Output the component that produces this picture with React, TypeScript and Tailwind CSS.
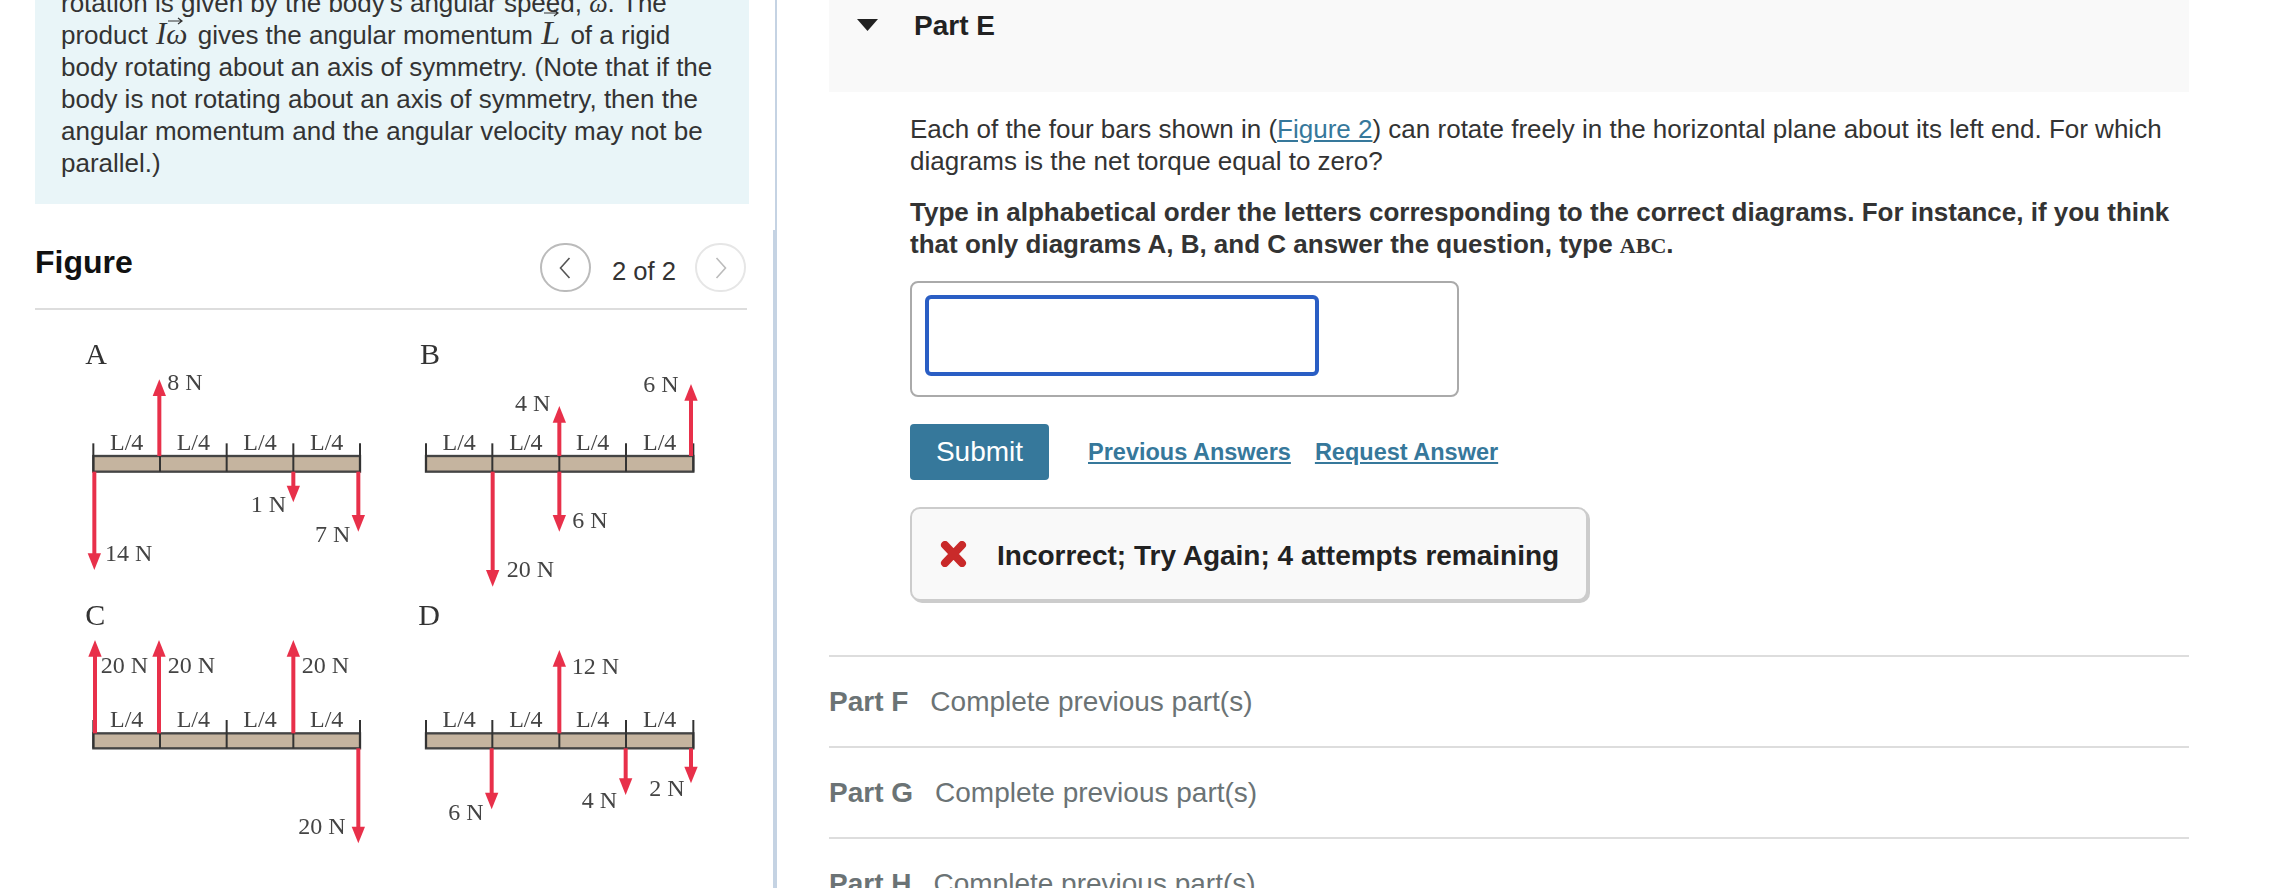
type Arrow = { x: number; tip: number; end: number; label: string; lx: number; ly: number }

type Diagram = {
  letter: string
  letterX: number
  letterY: number
  barTop: number
  barBottom: number
  tickTop: number
  ticks: number[]
  labelY: number
  arrows: Arrow[]
}

const diagrams: Diagram[] = [
  {
    letter: 'A',
    letterX: 76,
    letterY: 132,
    barTop: 408,
    barBottom: 455,
    tickTop: 370,
    ticks: [100, 300, 500, 700, 900],
    labelY: 390,
    arrows: [
      { x: 298, tip: 178, end: 408, label: '8 N', lx: 322, ly: 210 },
      { x: 103, tip: 750, end: 455, label: '14 N', lx: 135, ly: 722 },
      { x: 700, tip: 547, end: 455, label: '1 N', lx: 572, ly: 575 },
      { x: 895, tip: 635, end: 455, label: '7 N', lx: 765, ly: 665 },
    ],
  },
  {
    letter: 'B',
    letterX: 60,
    letterY: 132,
    barTop: 408,
    barBottom: 455,
    tickTop: 370,
    ticks: [78, 277, 478, 678, 880],
    labelY: 390,
    arrows: [
      { x: 478, tip: 258, end: 408, label: '4 N', lx: 345, ly: 272 },
      { x: 873, tip: 192, end: 408, label: '6 N', lx: 730, ly: 215 },
      { x: 478, tip: 635, end: 455, label: '6 N', lx: 517, ly: 625 },
      { x: 278, tip: 800, end: 455, label: '20 N', lx: 320, ly: 772 },
    ],
  },
  {
    letter: 'C',
    letterX: 76,
    letterY: 105,
    barTop: 430,
    barBottom: 475,
    tickTop: 390,
    ticks: [100, 300, 500, 700, 900],
    labelY: 410,
    arrows: [
      { x: 105, tip: 150, end: 430, label: '20 N', lx: 122, ly: 250 },
      { x: 297, tip: 150, end: 430, label: '20 N', lx: 323, ly: 250 },
      { x: 700, tip: 150, end: 430, label: '20 N', lx: 725, ly: 250 },
      { x: 895, tip: 760, end: 475, label: '20 N', lx: 715, ly: 733 },
    ],
  },
  {
    letter: 'D',
    letterX: 55,
    letterY: 105,
    barTop: 430,
    barBottom: 475,
    tickTop: 390,
    ticks: [78, 277, 478, 678, 880],
    labelY: 410,
    arrows: [
      { x: 478, tip: 180, end: 430, label: '12 N', lx: 515, ly: 252 },
      { x: 275, tip: 658, end: 475, label: '6 N', lx: 145, ly: 690 },
      { x: 677, tip: 615, end: 475, label: '4 N', lx: 545, ly: 655 },
      { x: 873, tip: 580, end: 475, label: '2 N', lx: 748, ly: 618 },
    ],
  },
]

const serif = '"Liberation Serif", serif'

function BarDiagram({ d }: { d: Diagram }) {
  const left = d.ticks[0]
  const right = d.ticks[4]
  return (
    <svg viewBox="0 0 1020 840" className="w-[340px] h-[280px] overflow-visible blur-[0.6px]">
      <text x={d.letterX} y={d.letterY} fontFamily={serif} fontSize={90} fill="#333">
        {d.letter}
      </text>
      <rect x={left} y={d.barTop} width={right - left} height={d.barBottom - d.barTop} fill="#c5b49f" stroke="#444" strokeWidth={7} />
      {d.ticks.map((t) => (
        <line key={t} x1={t} x2={t} y1={d.tickTop} y2={d.barBottom} stroke="#333" strokeWidth={6} />
      ))}
      {d.ticks.slice(0, 4).map((t, i) => (
        <text key={t} x={(t + d.ticks[i + 1]) / 2} y={d.labelY} textAnchor="middle" fontFamily={serif} fontSize={72} fill="#444">
          L/4
        </text>
      ))}
      {d.arrows.map((a) => {
        const dir = a.tip < a.end ? 1 : -1
        return (
          <g key={a.x + a.label + a.lx}>
            <line x1={a.x} x2={a.x} y1={a.end} y2={a.tip + dir * 40} stroke="#e8304a" strokeWidth={12} />
            <polygon points={`${a.x},${a.tip} ${a.x - 20},${a.tip + dir * 50} ${a.x + 20},${a.tip + dir * 50}`} fill="#e8304a" />
            <text x={a.lx} y={a.ly} fontFamily={serif} fontSize={72} fill="#444">
              {a.label}
            </text>
          </g>
        )
      })}
    </svg>
  )
}

function VectorSymbol({ base, className }: { base: string; className: string }) {
  return (
    <span className="relative inline-block leading-[20px] font-['Liberation_Serif',serif] italic">
      {base}
      <svg viewBox="0 0 16 8" className={`absolute w-[16px] h-[8px] ${className}`}>
        <path d="M0 4h14M10 1l4 3-4 3" fill="none" stroke="#333" strokeWidth="1.2" />
      </svg>
    </span>
  )
}

function LockedPart({ name }: { name: string }) {
  return (
    <div className="flex items-center gap-[22px] h-[91px] border-t-2 border-[#dddddd] text-[28px] text-[#6b7375]">
      <span className="font-bold">{name}</span>
      <span>Complete previous part(s)</span>
    </div>
  )
}

export default function App() {
  return (
    <div className="flex h-[888px] overflow-hidden bg-white font-['Liberation_Sans',sans-serif] text-[26px] leading-[32px] text-[#333333]">
      {/* Left Content */}
      <div className="w-[773px] shrink-0 pl-[35px] pr-[24px]">
        <div className="bg-[#e9f5f8] -mt-[40px] pt-[27px] pb-[25px] pl-[26px] pr-[29px]">
          <p>
            rotation is given by the body's angular speed, <span className="leading-[0] font-['Liberation_Serif',serif] italic">ω</span>. The
            product <span className="leading-[0] font-['Liberation_Serif',serif] italic text-[31px] ml-[1px]">I</span>
            <span className="text-[30px] leading-[0] mr-[3px]">
              <VectorSymbol base="ω" className="left-[2px] top-[-7px]" />
            </span>{' '}
            gives the angular momentum{' '}
            <span className="leading-[0] text-[34px] ml-[1px] mr-[3px]">
              <VectorSymbol base="L" className="left-[3px] top-[-14px]" />
            </span>{' '}
            of a rigid body rotating about an axis of symmetry. (Note that if the body is not rotating about an axis of symmetry, then
            the angular momentum and the angular velocity may not be parallel.)
          </p>
        </div>

        <div className="flex items-start justify-between mt-[39px] pb-[16px] border-b-2 border-[#dddddd] mr-[2px]">
          <h2 className="font-bold text-[32px] leading-[38px] text-[#111111]">Figure</h2>
          <div className="flex items-center h-[49px] mr-[1px]">
            <button className="w-[51px] h-[49px] rounded-full border-2 border-[#bbbbbb] flex items-center justify-center">
              <svg viewBox="0 0 12 22" className="w-[12px] h-[22px]">
                <path d="M10.500 1L1.500 11l9 10" fill="none" stroke="#555" strokeWidth="1.6" />
              </svg>
            </button>
            <span className="ml-[21px] mr-[19px] mt-[7px] text-[25.6px]">2 of 2</span>
            <button className="w-[51px] h-[49px] rounded-full border-2 border-[#e6e6e6] flex items-center justify-center">
              <svg viewBox="0 0 12 22" className="w-[12px] h-[22px]">
                <path d="M1.500 1l9 10-9 10" fill="none" stroke="#bbb" strokeWidth="1.6" />
              </svg>
            </button>
          </div>
        </div>

        <div className="grid grid-cols-[340px_340px] grid-rows-[270px_280px] mt-[10px] ml-[25px]">
          {diagrams.map((d) => (
            <BarDiagram key={d.letter} d={d} />
          ))}
        </div>
      </div>

      {/* Divider */}
      <div className="w-[4px] shrink-0 flex flex-col items-end">
        <div className="w-[2px] h-[230px] bg-[#c5d3e3]" />
        <div className="w-[4px] flex-1 bg-[#c5d3e3]" />
      </div>

      {/* Right Content */}
      <div className="w-[1412px] shrink-0 pl-[52px]">
        <div className="flex items-start h-[92px] bg-[#f9f9f9] pl-[28px] pt-[9px]">
          <svg viewBox="0 0 21 12" className="w-[21px] h-[12px] mt-[10px]">
            <path d="M0 0h21L10.500 12z" fill="#222" />
          </svg>
          <h3 className="ml-[36px] font-bold text-[28px] leading-[34px] text-[#222222]">Part E</h3>
        </div>

        <div className="pl-[81px]">
          <p className="mt-[21px]">
            Each of the four bars shown in (<a className="text-[#36789b] underline">Figure 2</a>) can rotate freely in the horizontal
            plane about its left end. For which diagrams is the net torque equal to zero?
          </p>
          <p className="mt-[19px] font-bold">
            Type in alphabetical order the letters corresponding to the correct diagrams. For instance, if you think that only
            diagrams A, B, and C answer the question, type <span className="leading-none text-[22px] font-['Liberation_Serif',serif]">ABC</span>.
          </p>

          <div className="mt-[21px] w-[549px] h-[116px] border-2 border-[#aaaaaa] rounded-[8px] pl-[13px] pt-[12px]">
            <input className="block w-[394px] h-[81px] border-[4px] border-[#2a5ec4] rounded-[6px] outline-none" />
          </div>

          <div className="flex items-center mt-[27px]">
            <button className="w-[139px] h-[56px] bg-[#36789b] rounded-[4px] text-white text-[28px]">Submit</button>
            <a className="ml-[39px] font-bold text-[23.5px] text-[#36789b] underline">Previous Answers</a>
            <a className="ml-[24px] font-bold text-[23.5px] text-[#36789b] underline">Request Answer</a>
          </div>

          <div className="flex items-center mt-[27px] w-[678px] h-[94px] bg-[#f9f9f9] border-2 border-[#cccccc] rounded-[10px] shadow-[2px_2px_0_#cccccc] pl-[28px]">
            <svg viewBox="0 0 27 26" className="w-[27px] h-[26px]">
              <path d="M5 4l17 18M22 4L5 22" fill="none" stroke="#c92a2a" strokeWidth="8" strokeLinecap="round" />
            </svg>
            <span className="ml-[30px] mt-[4px] font-bold text-[28px] text-[#222222]">Incorrect; Try Again; 4 attempts remaining</span>
          </div>
        </div>

        <div className="mt-[54px]">
          <LockedPart name="Part F" />
          <LockedPart name="Part G" />
          <LockedPart name="Part H" />
        </div>
      </div>
    </div>
  )
}
